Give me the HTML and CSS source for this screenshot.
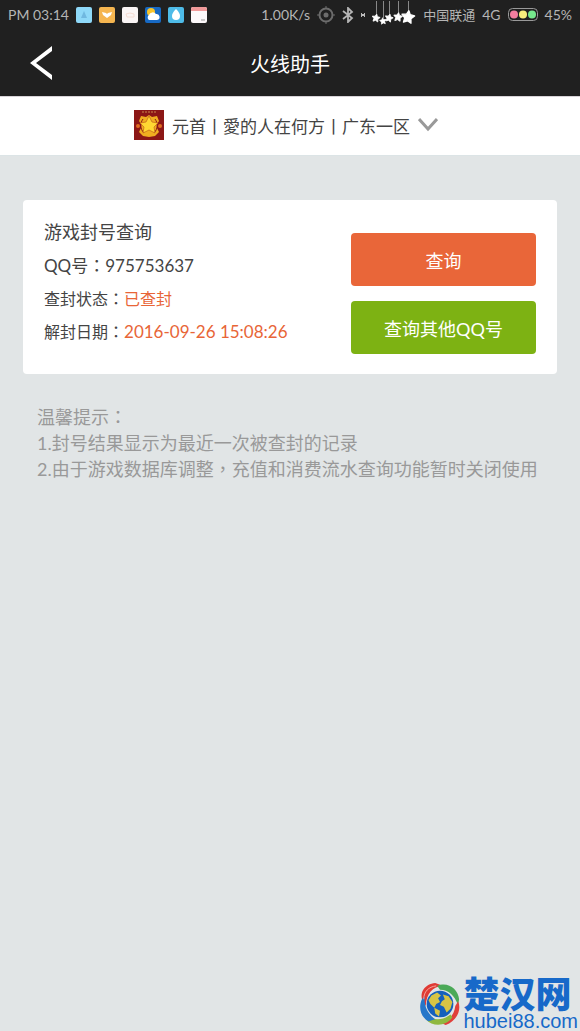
FILE: index.html
```html
<!DOCTYPE html>
<html lang="zh-CN">
<head>
    <meta charset="UTF-8">
    <meta name="viewport" content="width=device-width, initial-scale=1.0">
    <title>火线助手</title>
    <link rel="stylesheet" href="styles.css">
</head>
<body>
    <div class="status-bar">
        <div class="status-left">
            <span class="clock">PM 03:14</span>
            <svg class="app-icon" viewBox="0 0 16 16"><rect width="16" height="16" rx="2" fill="#8ed8f8"/><path d="M8 4l3 7H5z" fill="#70b8e0"/></svg>
            <svg class="app-icon" viewBox="0 0 16 16"><rect width="16" height="16" rx="2" fill="#f5b550"/><path d="M3 5l4 1 1 1 1-1 4-1-1 3-4 3-4-3z" fill="#fff"/></svg>
            <svg class="app-icon" viewBox="0 0 16 16"><rect width="16" height="16" rx="2" fill="#faf5f5"/><path d="M4 7l4-1 4 1v3H5z" fill="none" stroke="#f5dcd2"/></svg>
            <svg class="app-icon" viewBox="0 0 16 16"><rect width="16" height="16" rx="2" fill="#1769c4"/><circle cx="6" cy="5" r="4" fill="#f8c52c"/><path d="M4 13a3 3 0 0 1 0-5 4 4 0 0 1 7-1 3 3 0 1 1 1 6z" fill="#fff"/></svg>
            <svg class="app-icon" viewBox="0 0 16 16"><rect width="16" height="16" rx="2" fill="#4ebbe8"/><path d="M8 2c3 3 4 5 4 7a4 4 0 0 1-8 0c0-2 1-4 4-7z" fill="#fff"/></svg>
            <svg class="app-icon" viewBox="0 0 16 16"><rect width="16" height="16" rx="2" fill="#fcf8fa"/><path d="M0 4V2a2 2 0 0 1 2-2h12a2 2 0 0 1 2 2v2z" fill="#f09a9a"/><path d="M10 13h4" stroke="#999"/></svg>
        </div>
        <div class="status-right">
            <span class="speed">1.00K/s</span>
            <svg class="target" viewBox="0 0 18 18"><circle cx="9" cy="9" r="6.500" fill="none" stroke="#6c6c6c" stroke-width="2"/><circle cx="9" cy="9" r="2.500" fill="#6c6c6c"/><path d="M9 0v3M9 15v3M0 9h3M15 9h3" stroke="#6c6c6c"/></svg>
            <svg class="bluetooth" viewBox="0 0 12 16"><path d="M1 4l9 7-4 4V1l4 4-9 7" fill="none" stroke="#b5b5b5" stroke-width="1.800"/></svg>
            <svg class="signal-dot" viewBox="0 0 4 4"><path d="M0 0v4M4 0v4M0 2h4" stroke="#bbb" stroke-width="2"/></svg>
            <svg class="stars" viewBox="0 0 44 28">
                <defs>
                    <path id="star" d="M0-10L3-4 10-3 5 2 6 9 0 6-6 9-5 2-10-3-3-4z" fill="#fff" stroke="#fff" stroke-width="2" stroke-linejoin="round"/>
                </defs>
                <path d="M4.500 0v13M11.500 0v17M17.500 0v13M26.500 0v13M36.500 0v10" stroke="#888"/>
                <use href="#star" transform="translate(4 17) rotate(10) scale(.4)"/>
                <use href="#star" transform="translate(11 20) rotate(-8) scale(.33)"/>
                <use href="#star" transform="translate(17 17) rotate(14) scale(.4)"/>
                <use href="#star" transform="translate(26 16) rotate(8) scale(.44)"/>
                <use href="#star" transform="translate(36 16) rotate(8) scale(.64)"/>
            </svg>
            <span class="carrier">中国联通</span>
            <span class="network">4G</span>
            <svg class="battery" viewBox="0 0 30 14"><rect x=".5" y=".5" width="29" height="12" rx="4" fill="none" stroke="#999"/><circle cx="6" cy="6.500" r="4" fill="#f47d9e"/><circle cx="15" cy="6.500" r="4" fill="#f8ee7c"/><circle cx="24" cy="6.500" r="4" fill="#76e98d"/></svg>
            <span class="percent">45%</span>
        </div>
    </div>

    <header class="title-bar">
        <a class="back" href="#" aria-label="返回">
            <svg viewBox="0 0 24 36"><path d="M24 1v5L8 18l16 12v5L2 18z" fill="#fff"/></svg>
        </a>
        <h1>火线助手</h1>
    </header>

    <button class="account" type="button">
        <svg class="avatar" viewBox="0 0 30 30">
            <rect width="30" height="30" fill="#8c1716"/>
            <path d="M8 2h14" stroke="#c98a4a" stroke-dasharray="2 1"/>
            <path d="M7 6l5 1 3-2 3 2 5-1 2 5-2 3v4l2 4-4 4-6 1-6-1-4-4 2-4v-4l-2-3z" fill="#f0ae20"/>
            <path d="M9 9c-3 4-3 10 1 14M21 9c3 4 3 10-1 14" fill="none" stroke="#8c1716"/>
            <path d="M15 6l3 6 6 1-4 4 1 6-6-3-6 3 1-6-4-4 6-1z" fill="#ffd832" stroke="#b8501a" stroke-width=".6"/>
            <circle cx="4" cy="16" r="2" fill="#e06d20"/><circle cx="26" cy="16" r="2" fill="#e06d20"/>
        </svg>
        <span>元首丨愛的人在何方丨广东一区</span>
        <svg class="arrow" viewBox="0 0 20 14"><path d="M1 1l9 10 9-10" fill="none" stroke="#999" stroke-width="3"/></svg>
    </button>

    <main>
        <section class="card">
            <div class="info">
                <h2>游戏封号查询</h2>
                <p class="qq">QQ号<span class="mark" lang="zh-TW">：</span>975753637</p>
                <p>查封状态<span class="mark" lang="zh-TW">：</span><span class="alert">已查封</span></p>
                <p>解封日期<span class="mark" lang="zh-TW">：</span><span class="alert date">2016-09-26 15:08:26</span></p>
            </div>
            <div class="actions">
                <button class="btn orange" type="button">查询</button>
                <button class="btn green" type="button">查询其他QQ号</button>
            </div>
        </section>

        <section class="tips">
            <p>温馨提示<span class="mark" lang="zh-TW">：</span></p>
            <p>1.封号结果显示为最近一次被查封的记录</p>
            <p>2.由于游戏数据库调整<span class="mark" lang="zh-TW">，</span>充值和消费流水查询功能暂时关闭使用</p>
        </section>
    </main>

    <footer>
        <a class="site" href="#">
            <svg class="globe" viewBox="0 0 44 46">
                <circle cx="22" cy="23" r="14" fill="#1560bd"/>
                <path d="M13 14l6-3 4 3-3 3 2 4-4 2-2 4-4-4-2-4zM25 13l6 2 4 6-2 7-4 4-3-6-4-2 2-4 3-2zM16 27l6 3-1 6-4-3z" fill="#d8c445"/>
                <path d="M4 20C0 11 6 2 17 1l8 3C14 5 8 12 7 25z" fill="#e03a34"/>
                <path d="M19 4c11-5 22 3 23 14l-1 6C37 14 31 8 22 8z" fill="#4aa957"/>
                <path d="M41 20c4 10-2 21-13 25l-5-2c9-3 14-9 15-18z" fill="#e0403a"/>
                <path d="M35 37c-6 9-20 11-28 2l-1-5c8 6 18 7 27 0z" fill="#8fb83f"/>
                <path d="M10 41C2 37-1 27 3 18l3-3c-1 10 3 18 11 24z" fill="#2676c9"/>
                <path d="M5 18C5 10 10 5 18 4" fill="none" stroke="#f6a9a0"/>
            </svg>
            <span class="site-text">
                <strong>楚汉网</strong>
                <span class="domain">hubei88.com</span>
            </span>
        </a>
    </footer>
</body>
</html>
```
FILE: styles.css
```css
* {
    box-sizing: border-box;
}
body {
    font-family: Lato, "Noto Sans CJK SC", sans-serif;
    background-color: #e1e5e6;
    color: #444;
    margin: 0;
    min-height: 100vh;
    display: flex;
    flex-direction: column;
}
h1, h2, p {
    margin: 0;
    font-weight: normal;
}
svg {
    display: block;
    flex-shrink: 0;
}
button {
    font-family: inherit;
    border: none;
    cursor: pointer;
}
.mark {
    font-family: "Noto Sans CJK TC", sans-serif;
    line-height: 1;
}
.status-bar {
    background-color: #202020;
    color: #b5b5b5;
    height: 30px;
    padding: 0 8px;
    display: flex;
    justify-content: space-between;
    font-size: 14px;
    line-height: 30px;
    white-space: nowrap;
}
.status-left {
    display: flex;
    align-items: center;
    gap: 7px;
}
.status-right {
    display: flex;
    align-items: center;
    gap: 7px;
}
.app-icon {
    width: 16px;
    height: 16px;
}
.target {
    width: 18px;
    height: 18px;
}
.bluetooth {
    width: 12px;
    height: 16px;
}
.signal-dot {
    width: 4px;
    height: 4px;
}
.stars {
    width: 44px;
    height: 28px;
}
.carrier {
    font-size: 13px;
}
.battery {
    width: 30px;
    height: 14px;
}
.title-bar {
    background-color: #202020;
    color: #fff;
    height: 66px;
    padding: 0 28px;
    display: grid;
    grid-template-columns: 24px 1fr 24px;
    align-items: center;
}
.back svg {
    width: 24px;
    height: 36px;
}
h1 {
    font-size: 20px;
    text-align: center;
}
.account {
    background-color: #fff;
    color: #444;
    width: 100%;
    height: 60px;
    padding: 0 8px 2px 0;
    border-top: 1px solid #d8d4d8;
    border-bottom: 1px solid #dce4e6;
    display: flex;
    align-items: center;
    justify-content: center;
    gap: 8px;
    font-size: 17px;
}
.avatar {
    width: 30px;
    height: 30px;
}
.arrow {
    width: 20px;
    height: 14px;
}
main {
    flex: 1;
    padding: 44px 23px;
}
.card {
    background-color: #fff;
    border-radius: 4px;
    padding: 16px 21px 20px;
    display: flex;
    justify-content: space-between;
}
.info {
    font-size: 16px;
    line-height: 33px;
}
h2 {
    font-size: 18px;
}
.qq,
.date {
    font-size: 17px;
}
.date {
    line-height: 1;
}
.alert {
    color: #e86537;
}
.actions {
    width: 185px;
    padding-top: 17px;
    display: flex;
    flex-direction: column;
    gap: 15px;
}
.btn {
    color: #fff;
    height: 53px;
    border-radius: 4px;
    font-size: 18px;
}
.orange {
    background-color: #e96639;
}
.green {
    background-color: #7db213;
}
.tips {
    color: #999;
    font-size: 18px;
    line-height: 26px;
    padding: 30px 0 30px 14px;
}
footer {
    display: flex;
    justify-content: flex-end;
}
.site {
    display: flex;
    align-items: center;
    gap: 2px;
    padding-right: 2px;
    color: #1769c9;
    text-decoration: none;
}
.globe {
    width: 42px;
    height: 44px;
}
.site-text {
    display: flex;
    flex-direction: column;
}
strong {
    font-size: 36px;
    line-height: 34px;
    font-weight: 900;
}
.domain {
    font-family: "Liberation Sans", sans-serif;
    font-size: 20px;
    line-height: 20px;
}
```
